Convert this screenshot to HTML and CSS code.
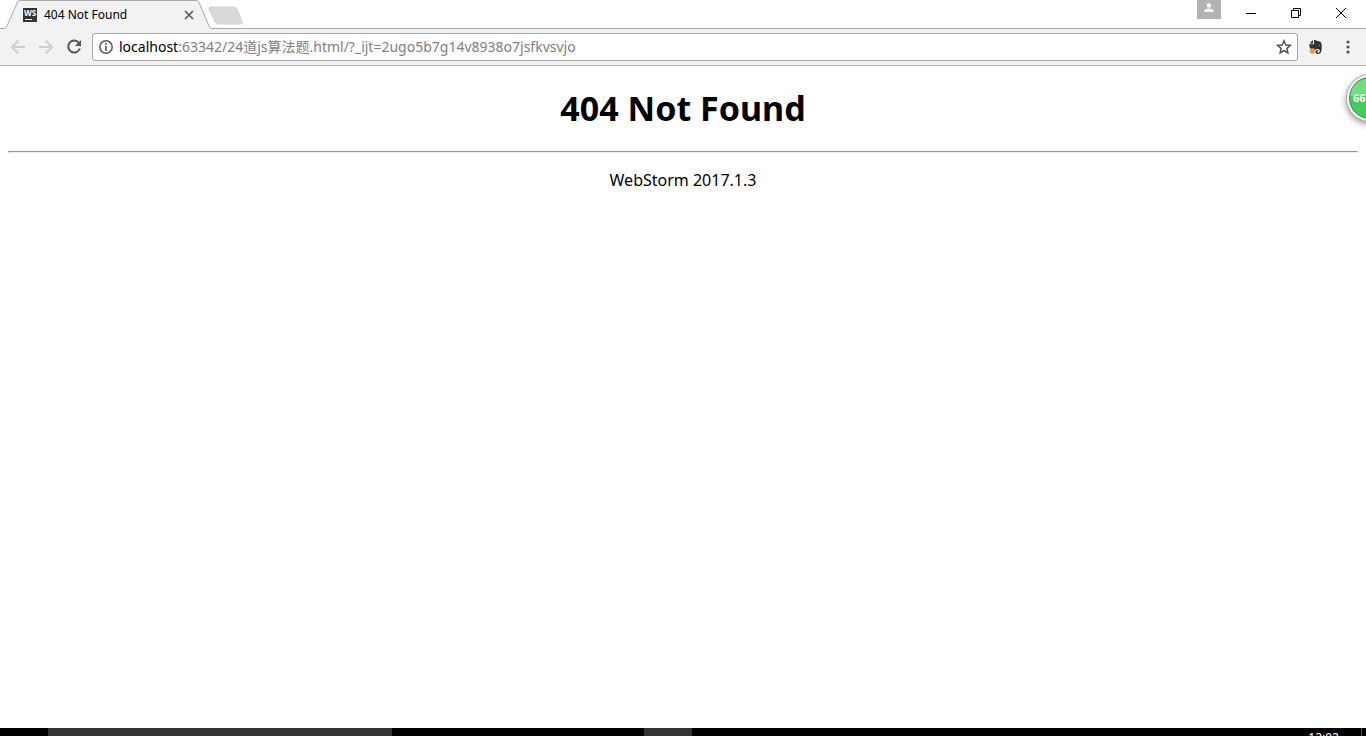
FILE: index.html
```html
<!DOCTYPE html>
<html lang="en">
<head>
<meta charset="utf-8">
<title>404 Not Found</title>
<link rel="stylesheet" href="styles.css">
</head>
<body>
<header class="browser">
  <div class="titlebar">
    <div class="tab">
      <svg class="tab-shape" width="212" height="29" viewBox="0 0 212 29" aria-hidden="true"><path d="M0 28.500H3Q6 28.500 7 26L17.500 2Q18.500.5 20 .5H196Q198 .5 199 2.500L209 26Q210 28.500 212 28.500V29H0Z" fill="#f2f2f2"/><path d="M0 28.500H3Q6 28.500 7 26L17.500 2Q18.500.5 20 .5H196Q198 .5 199 2.500L209 26Q210 28.500 212 28.500" fill="none" stroke="#a9a9a9"/></svg>
      <span class="favicon">WS</span>
      <span class="tab-title">404 Not Found</span>
      <button class="icon-button tab-close" aria-label="Close tab"><svg width="10" height="10" viewBox="0 0 10 10"><path d="M1 1l8 8M9 1L1 9" stroke="#5a5a5a" stroke-width="1.700"/></svg></button>
    </div>
    <button class="icon-button new-tab" aria-label="New tab"><svg width="36" height="19" viewBox="0 0 36 19"><path d="M3 1H26Q28 1 29 3L34 15.500Q34.500 18 33 18H10Q8 18 7 16L1.300 4Q0 1 3 1Z" fill="#d9d9d9" stroke="#d0d0d0"/></svg></button>
    <div class="window-controls">
      <button class="icon-button profile" aria-label="Profile"><svg width="10" height="10" viewBox="0 0 10 10" fill="#fff"><circle cx="5" cy="2.500" r="2.200"/><path d="M.5 9V7.500Q1 5.500 5 5.500T9.500 7.500V9Z"/></svg></button>
      <button class="icon-button" aria-label="Minimize"><svg width="10" height="10" viewBox="0 0 10 10"><path d="M0 5.500H10" stroke="#000"/></svg></button>
      <button class="icon-button" aria-label="Restore"><svg width="10" height="10" viewBox="0 0 10 10" fill="none" stroke="#000"><path d="M.5 2.500H7.500V9.500H.5ZM2.500 2.500V.5H9.500V7.500H7.500"/></svg></button>
      <button class="icon-button" aria-label="Close"><svg width="10" height="10" viewBox="0 0 10 10"><path d="M0 0L10 10M10 0L0 10" stroke="#000"/></svg></button>
    </div>
  </div>
  <div class="toolbar">
    <button class="icon-button" aria-label="Back"><svg width="16" height="16" viewBox="0 0 16 16" fill="none" stroke="#cdcdcd" stroke-width="2"><path d="M15 8H2.500M8.500 1.500L2 8l6.500 6.500"/></svg></button>
    <button class="icon-button" aria-label="Forward"><svg width="16" height="16" viewBox="0 0 16 16" fill="none" stroke="#cdcdcd" stroke-width="2"><path d="M1 8H13.500M7.500 1.500L14 8l-6.500 6.500"/></svg></button>
    <button class="icon-button" aria-label="Reload"><svg width="16" height="16" viewBox="0 0 16 16"><path d="M13.200 4.200A6 6 0 1 0 13.900 9.500" fill="none" stroke="#555" stroke-width="2"/><path d="M15 1V7H9Z" fill="#555"/></svg></button>
    <div class="address">
      <svg width="14" height="14" viewBox="0 0 14 14" aria-hidden="true"><circle cx="7" cy="7" r="6.200" fill="none" stroke="#5a5a5a" stroke-width="1.500"/><path d="M6.200 6h1.700v5H6.200ZM6.200 3h1.700v1.800H6.200Z" fill="#5a5a5a"/></svg>
      <label class="host" for="url">localhost</label>
      <input class="url" id="url" type="text" value=":63342/24道js算法题.html/?_ijt=2ugo5b7g14v8938o7jsfkvsvjo" spellcheck="false">
      <button class="icon-button" aria-label="Bookmark"><svg width="16" height="16" viewBox="0 0 16 16"><path d="M8 1.800L9.800 6l4.600.4-3.500 3 1 4.500L8 11.500l-3.900 2.400 1-4.500-3.500-3L6.200 6Z" fill="none" stroke="#555" stroke-width="1.500"/></svg></button>
    </div>
    <button class="icon-button" aria-label="Web clipper"><svg width="16" height="16" viewBox="0 0 16 16"><path d="M5 1L1.500 4.500H4.500Q5 4.500 5 4Z" fill="#333"/><path d="M6 1Q8 .8 9 2L12 2.500Q13.500 3 13.700 6Q14 12 12.500 14Q11.500 15 9.500 15Q7.500 15 7.500 13Q7.500 11 10 11V12.500Q9 12.500 9 13.200Q9.500 14 11 13.500Q12 13 11.700 11Q10.500 10 9 10Q8 11 6 10.500Q2.500 10.500 1.800 8.500Q1 6.500 1.300 5.300H5.500Q6 5.300 6 4.500Z" fill="#333"/><path d="M10.500 7Q11.500 5.800 12.300 7.200Q11.500 6.800 10.500 7Z" fill="#eee"/><circle cx="4.500" cy="12" r="2.800" fill="#ee984a"/></svg></button>
    <button class="icon-button menu" aria-label="Menu"><svg width="4" height="14" viewBox="0 0 4 14" fill="#555"><circle cx="2" cy="2" r="1.600"/><circle cx="2" cy="7" r="1.600"/><circle cx="2" cy="12" r="1.600"/></svg></button>
  </div>
</header>
<main class="page">
  <h1 class="heading">404 Not Found</h1>
  <hr class="rule">
  <p class="server">WebStorm 2017.1.3</p>
</main>
<div class="meter">66</div>
<footer class="taskbar">
  <div class="search-box"></div>
  <div class="active-app"></div>
  <div class="clock">12:02</div>
</footer>
</body>
</html>
```
FILE: styles.css
```css
* { box-sizing: border-box; }

body {
  display: flex;
  flex-direction: column;
  position: relative;
  height: 100vh;
  margin: 0;
  overflow: hidden;
  background: #fff;
  color: #000;
  font-family: "Noto Sans", "Noto Sans CJK SC", sans-serif;
}

.icon-button {
  display: flex;
  align-items: center;
  justify-content: center;
  flex: none;
  padding: 0;
  border: 0;
  background: none;
}

.titlebar {
  display: flex;
  height: 29px;
  box-shadow: inset 0 -1px #a9a9a9;
}

.tab {
  display: flex;
  align-items: center;
  position: relative;
  z-index: 0;
  width: 208px;
  padding: 0 14px 0 23px;
}

.tab-shape {
  position: absolute;
  top: 0;
  left: 0;
  z-index: -1;
}

.favicon {
  width: 14px;
  height: 14px;
  background: #343434;
  color: #fff;
  font-size: 8px;
  font-weight: 700;
  line-height: 10px;
  text-align: center;
}

.favicon::after {
  content: "";
  display: block;
  width: 7px;
  height: 1px;
  margin: 1px 0 0 2px;
  background: #fff;
}

.tab-title {
  flex: 1;
  padding-left: 7px;
  font-size: 12px;
}

.new-tab {
  align-self: center;
  margin-top: 2px;
}

.window-controls {
  display: flex;
  gap: 35px;
  margin-left: auto;
  padding: 0 20px 3px 0;
}

.profile {
  align-self: flex-start;
  width: 24px;
  height: 19px;
  margin-right: -10px;
  padding-bottom: 3px;
  background: #b3b3b3;
}

.toolbar {
  display: flex;
  align-items: center;
  gap: 12px;
  height: 37px;
  padding: 0 16px 0 10px;
  border-bottom: 1px solid #b1b1b1;
  background: #f2f2f2;
}

.menu { margin-left: 10px; }

.address {
  display: flex;
  align-items: center;
  flex: 1;
  min-width: 0;
  height: 28px;
  margin: 0 -2px;
  padding: 0 5px 0 6px;
  border: 1px solid #a6a6a6;
  border-radius: 3px;
  background: #fff;
  font-size: 14px;
}

.host,
.url {
  padding: 0 0 2px;
}

.host { margin-left: 6px; }

.url {
  flex: 1;
  min-width: 0;
  border: 0;
  outline: 0;
  color: #808080;
  font: inherit;
}

.page {
  flex: 1;
  padding: 0 8px;
  text-align: center;
}

.heading {
  margin: 18px 0;
  font-size: 34px;
  line-height: 49px;
}

.rule { margin: 0; }

.server {
  margin: 16px 0;
  font-size: 16px;
  line-height: 22px;
}

.meter {
  position: absolute;
  top: 75px;
  right: -27px;
  width: 46px;
  height: 46px;
  padding-left: 4px;
  border: 2px solid #f4f4f4;
  border-radius: 50%;
  background: linear-gradient(#72dc84 45%, #46cb5f 45%);
  box-shadow: inset 0 0 0 1px #23964a, 0 0 0 1px #aaa, -1px 3px 6px #999;
  color: #fff;
  font-size: 11px;
  font-weight: 700;
  line-height: 41px;
}

.taskbar {
  display: flex;
  height: 8px;
  overflow: hidden;
  background: #000;
}

.search-box {
  width: 344px;
  margin-left: 48px;
  background: #333;
}

.active-app {
  width: 48px;
  margin-left: 252px;
  background: #333;
}

.clock {
  margin-right: 4px;
  margin-left: auto;
  padding: 2px 22px 0 0;
  border-right: 1px solid #555;
  color: #fff;
  font-size: 12px;
  line-height: 16px;
}
```
